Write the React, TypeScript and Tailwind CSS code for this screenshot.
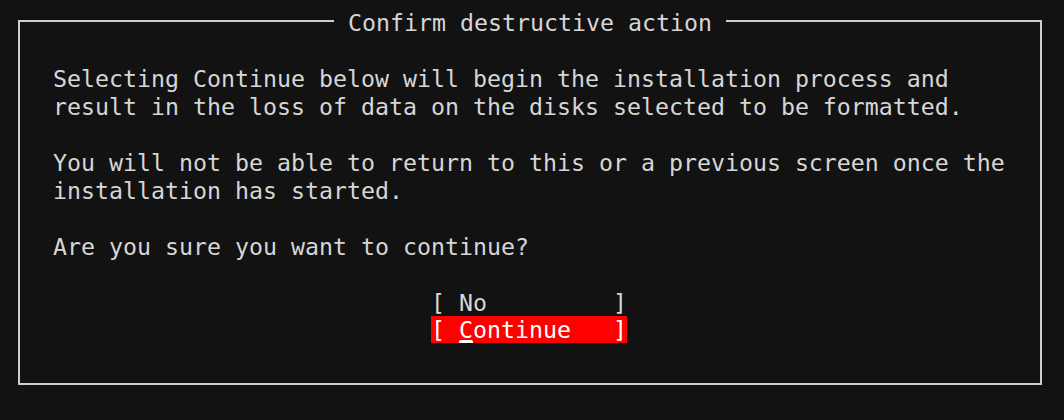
import React from "react";

const mono = { fontFamily: '"DejaVu Sans Mono", "Liberation Mono", monospace' };

export default function App() {
  return (
    <div
      className="w-[1064px] h-[420px] bg-[#121212] text-[#d6d6d6] pt-[20px] pl-[18px] overflow-hidden"
      style={mono}
    >
      <div className="relative box-border w-[1024px] h-[365px] border-2 border-[#cfcfcf] pl-[33px] pt-[43px] text-[23.25px] leading-[28px]">
        <div className="absolute left-[314px] top-[-13px] h-[28px] px-[14px] bg-[#121212] whitespace-pre leading-[28px]">
          Confirm destructive action
        </div>
        <div className="whitespace-pre">
          <div>Selecting Continue below will begin the installation process and</div>
          <div>result in the loss of data on the disks selected to be formatted.</div>
          <div>&nbsp;</div>
          <div>You will not be able to return to this or a previous screen once the</div>
          <div>installation has started.</div>
          <div>&nbsp;</div>
          <div>Are you sure you want to continue?</div>
          <div>&nbsp;</div>
          <div className="pl-[378px]">
            <div className="w-[196px]">{"[ No         ]"}</div>
            <div className="relative -mt-px w-[196px] h-[27px] bg-[#ff0000] text-white leading-[28px]">
              {"[ Continue   ]"}
              <span className="absolute left-[28px] bottom-0 w-[14px] h-[3px] bg-white rounded-t-[2px]" />
            </div>
          </div>
        </div>
      </div>
    </div>
  );
}
